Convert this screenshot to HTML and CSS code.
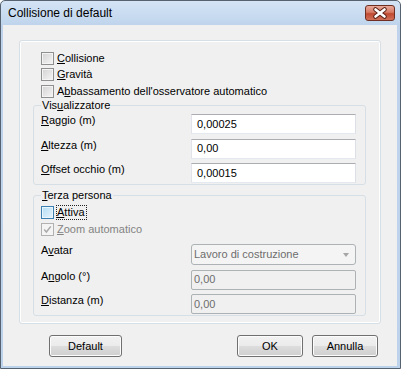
FILE: index.html
```html
<!DOCTYPE html>
<html lang="it">

<head>
    <meta charset="UTF-8">
    <title>Collisione di default</title>
    <link rel="stylesheet" href="styles.css">
</head>

<body>
    <div class="window">
        <div class="titlebar">
            <span class="title">Collisione di default</span>
            <span class="close">
                <svg width="30" height="16" viewBox="0 0 30 16">
                    <path d="M10.5 4.5 L19.5 11.5 M19.5 4.5 L10.5 11.5" stroke="#5a2115" stroke-width="4.6" stroke-linecap="round" fill="none"/>
                    <path d="M10.5 4.5 L19.5 11.5 M19.5 4.5 L10.5 11.5" stroke="#ffffff" stroke-width="2.6" stroke-linecap="round" fill="none"/>
                </svg>
            </span>
        </div>

        <div class="client">
            <div class="outer-group">
                <div class="checks">
                    <div class="check"><span class="box"></span><span><u>C</u>ollisione</span></div>
                    <div class="check"><span class="box"></span><span><u>G</u>ravità</span></div>
                    <div class="check"><span class="box"></span><span>A<u>b</u>bassamento dell'osservatore automatico</span></div>
                </div>

                <fieldset class="group vis">
                    <legend>Vis<u>u</u>alizzatore</legend>
                    <div class="row">
                        <span class="label"><u>R</u>aggio (m)</span>
                        <span class="edit">0,00025</span>
                    </div>
                    <div class="row">
                        <span class="label"><u>A</u>ltezza (m)</span>
                        <span class="edit">0,00</span>
                    </div>
                    <div class="row">
                        <span class="label"><u>O</u>ffset occhio (m)</span>
                        <span class="edit">0,00015</span>
                    </div>
                </fieldset>

                <fieldset class="group terza">
                    <legend><u>T</u>erza persona</legend>
                    <div class="check tall"><span class="box hover"></span><span class="focus"><u>A</u>ttiva</span></div>
                    <div class="check tall disabled">
                        <span class="box checked">
                            <svg width="11" height="11" viewBox="0 0 11 11">
                                <path d="M2.2 5.6 L4.4 8 L8.8 2.4" stroke="#a9a9a9" stroke-width="1.5" fill="none"/>
                            </svg>
                        </span>
                        <span><u>Z</u>oom automatico</span>
                    </div>
                    <div class="row combo-row">
                        <span class="label">A<u>v</u>atar</span>
                        <span class="combo">Lavoro di costruzione<span class="arrow"></span></span>
                    </div>
                    <div class="row">
                        <span class="label">A<u>n</u>golo (°)</span>
                        <span class="edit off">0,00</span>
                    </div>
                    <div class="row">
                        <span class="label"><u>D</u>istanza (m)</span>
                        <span class="edit off">0,00</span>
                    </div>
                </fieldset>
            </div>

            <div class="buttons">
                <span class="btn">Default</span>
                <span class="btn ok">OK</span>
                <span class="btn">Annulla</span>
            </div>
        </div>
    </div>
</body>

</html>
```

FILE: styles.css
```css
body {
    margin: 0;
    font-family: "Liberation Sans", Arial, sans-serif;
    font-size: 11px;
    color: #000;
    background: #fff;
}

.window {
    width: 401px;
    height: 369px;
    box-sizing: border-box;
    border: 1px solid #56626f;
    border-radius: 5px 5px 0 0;
    background: linear-gradient(#d4e4f5, #bfd4ec 24px, #bdd3eb);
    padding: 0 3px 2px 2px;
    display: flex;
    flex-direction: column;
}

.titlebar {
    height: 24px;
    display: flex;
    align-items: center;
    padding-left: 5px;
}

.title {
    font-size: 12px;
}

.close {
    margin-left: auto;
    margin-right: 2px;
    align-self: flex-start;
    margin-top: 4px;
    width: 30px;
    height: 16px;
    box-sizing: border-box;
    border: 1px solid #6e2e22;
    border-radius: 3px;
    background: linear-gradient(#e9a99b, #d57a64 45%, #c04a30 55%, #d0705a);
    display: flex;
}

.close svg {
    margin: -1px;
}

.client {
    flex: 1;
    background: #f0f0f0;
    padding: 15px 16px 0 16px;
    display: flex;
    flex-direction: column;
}

.outer-group {
    height: 284px;
    box-sizing: border-box;
    border: 1px solid #d5dfe5;
    border-radius: 3px;
    box-shadow: inset 0 0 0 1px #fff;
    padding: 9px 0 0 13px;
}

.checks {
    padding-left: 8px;
}

.check {
    display: flex;
    align-items: center;
    height: 16.5px;
    gap: 3px;
    line-height: 13px;
}

.check.tall {
    height: 17px;
}

.box {
    width: 13px;
    height: 13px;
    box-sizing: border-box;
    border: 1px solid #8e8f8f;
    background: linear-gradient(135deg, #d2d2d2, #f6f6f6);
    box-shadow: inset 0 0 0 1px #f4f4f4;
    flex: none;
}

.box.hover {
    border-color: #3c7fb1;
    background: linear-gradient(135deg, #b3dcf5, #e6f5fd);
    box-shadow: inset 0 0 0 1px #eaf6fd;
}

.box.checked {
    border-color: #b1b1b1;
    background: #f4f4f4;
    box-shadow: none;
}

.box svg {
    display: block;
}

.disabled {
    color: #838383;
}

.focus {
    border: 1px dotted #222;
    margin-left: -1px;
    padding-right: 1px;
    line-height: 13px;
}

.group {
    width: 333px;
    box-sizing: border-box;
    min-width: 0;
    margin: 0;
    border: 1px solid #d5dfe5;
    border-radius: 3px;
    padding: 2.5px 9px 1px 7px;
}

.group legend {
    padding: 0 1px;
    line-height: 13px;
}

.vis {
    margin-top: -1px;
}

.terza {
    margin-top: 3.5px;
}

.row {
    display: flex;
    align-items: flex-start;
    height: 20px;
    line-height: 13px;
}

.row + .row {
    margin-top: 4.5px;
}

.check + .row {
    margin-top: 6px;
}

.label {
    width: 150px;
    flex: none;
}

.edit {
    width: 165px;
    height: 20px;
    box-sizing: border-box;
    border: 1px solid;
    border-color: #abadb3 #dbdfe6 #e3e9ef #e2e3ea;
    background: #fff;
    padding: 0 5px;
    display: flex;
    align-items: center;
}

.terza .edit {
    width: 168px;
}

.edit.off {
    background: #f0f0f0;
    border-color: #adb2b5;
    border-radius: 2px;
    color: #6d6d6d;
    padding: 0 2px;
}

.combo-row {
    height: 21px;
}

.combo {
    width: 168px;
    height: 21px;
    box-sizing: border-box;
    border: 1px solid #adb2b5;
    border-radius: 3px;
    background: #f4f4f4;
    color: #6d6d6d;
    padding: 0 6px 0 2px;
    display: flex;
    align-items: center;
}

.arrow {
    margin-left: auto;
    border-left: 3.5px solid transparent;
    border-right: 3.5px solid transparent;
    border-top: 4px solid #a6a6a6;
}

.buttons {
    display: flex;
    margin: 11px 3px 0 30px;
    gap: 9px;
}

.btn {
    height: 22px;
    width: 66px;
    box-sizing: border-box;
    border: 1px solid #707070;
    border-radius: 3px;
    background: linear-gradient(#f2f2f2, #ebebeb 50%, #dddddd 50%, #cfcfcf);
    box-shadow: inset 0 0 0 1px #fcfcfc;
    display: flex;
    align-items: center;
    justify-content: center;
}

.btn:first-child {
    width: 73px;
}

.btn.ok {
    margin-left: auto;
}
```
